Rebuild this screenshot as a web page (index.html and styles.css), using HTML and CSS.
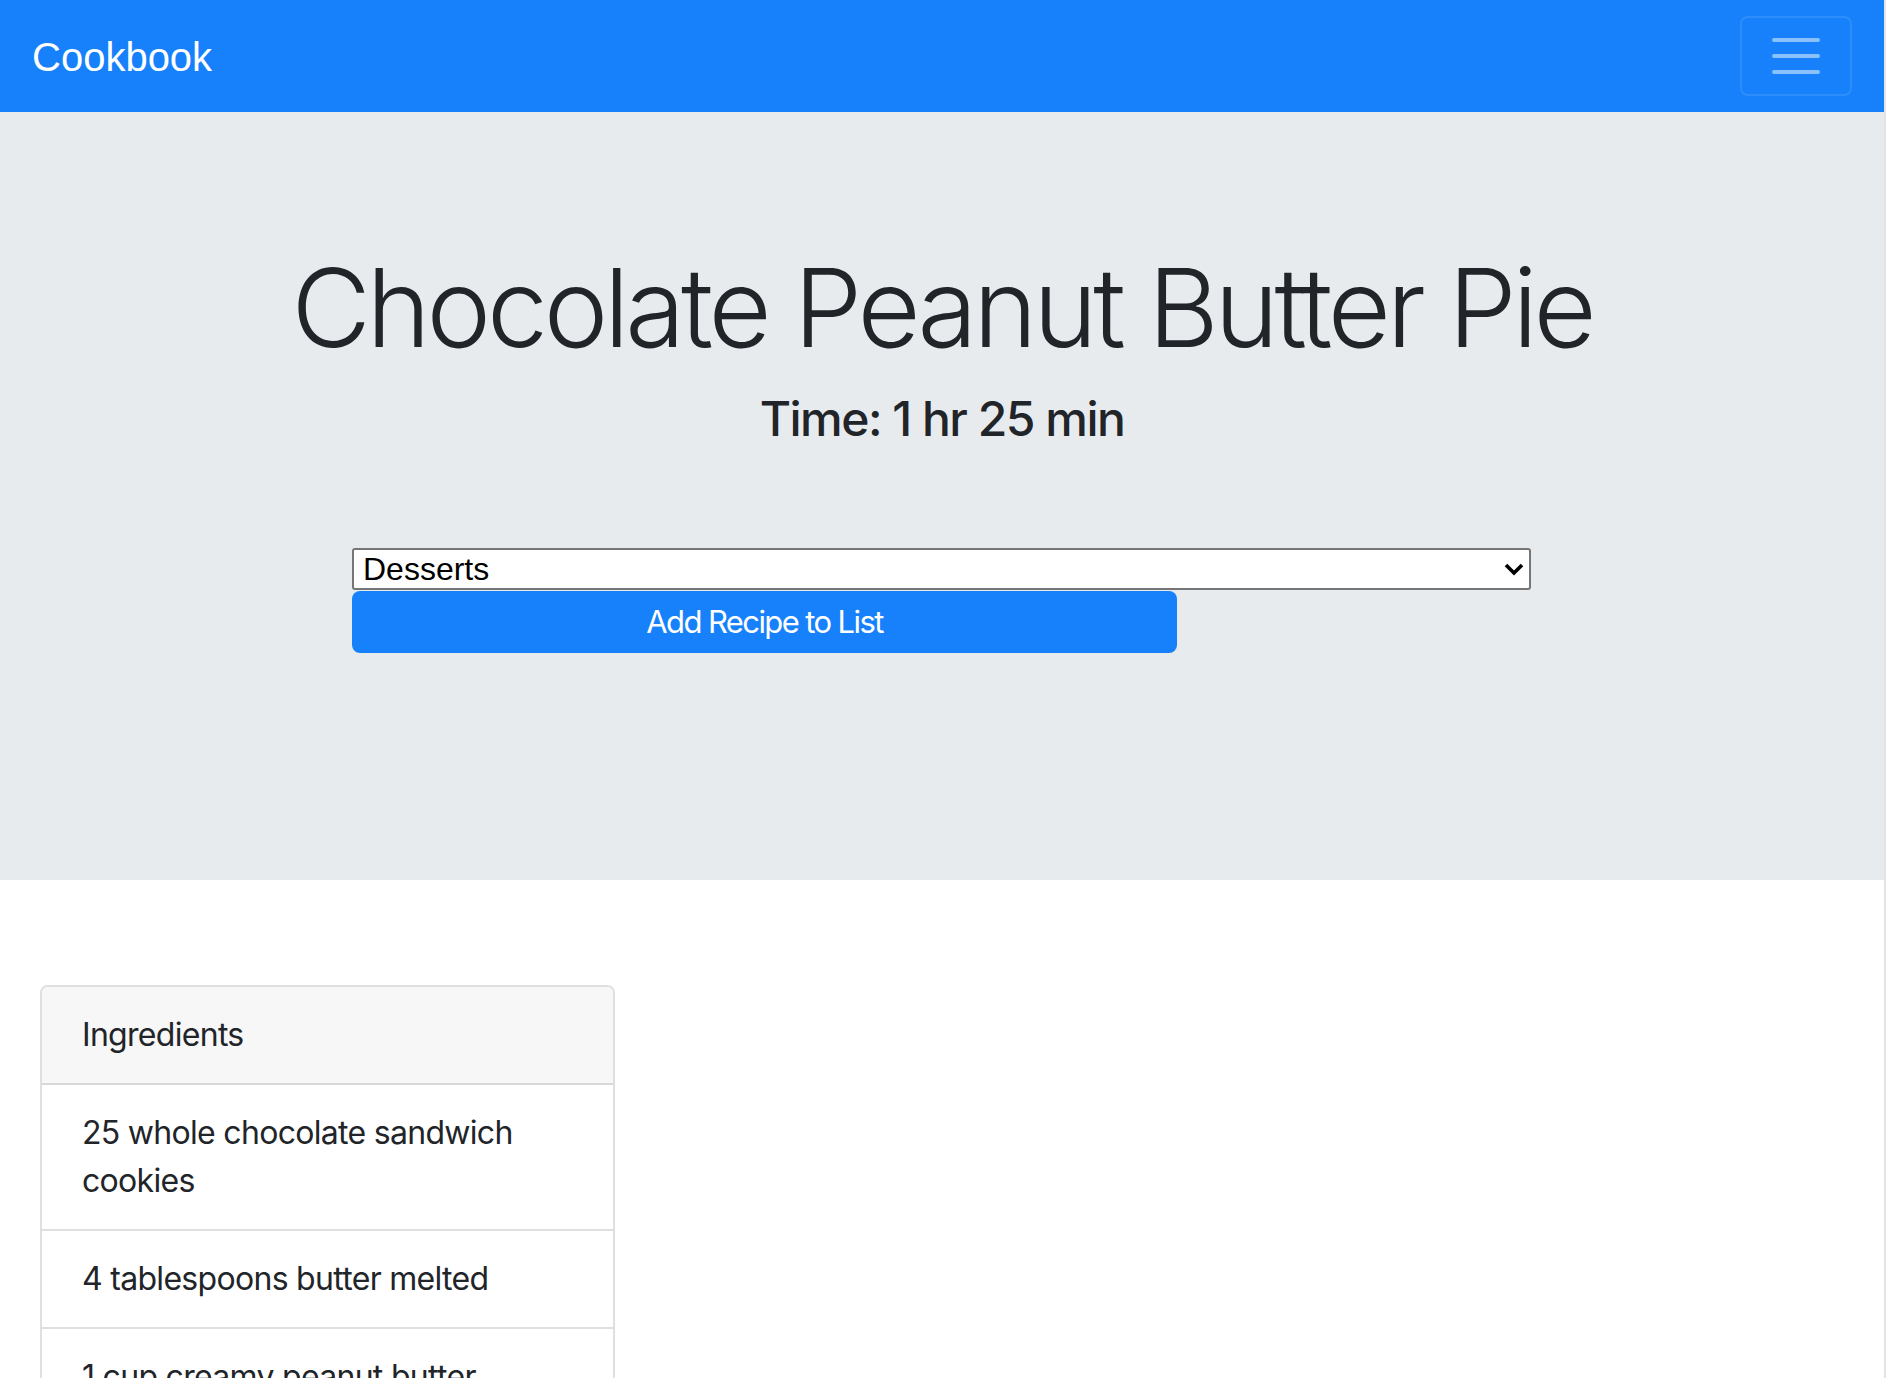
FILE: index.html
```html
<!DOCTYPE html>
<html lang="en">
<head>
<meta charset="utf-8">
<title>Cookbook</title>
<link rel="stylesheet" href="styles.css">
</head>
<body>
<div class="page">
  <nav class="navbar">
    <a class="brand" href="#">Cookbook</a>
    <button class="toggler" type="button" aria-label="Toggle navigation">
      <svg class="toggler-icon" width="60" height="60" viewBox="0 0 30 30"><path d="M4 7h22M4 15h22M4 23h22" stroke="rgba(255,255,255,0.5)" stroke-width="2" stroke-linecap="round" fill="none"/></svg>
    </button>
  </nav>
  <header class="jumbotron">
    <h1 class="title">Chocolate Peanut Butter Pie</h1>
    <h4 class="time">Time: 1 hr 25 min</h4>
    <form class="recipe-form">
      <div class="select-wrap">
        <select class="category">
          <option>Desserts</option>
          <option>Dinner</option>
          <option>Breakfast</option>
        </select>
        <svg class="chevron" width="22" height="16" viewBox="0 0 22 16"><path d="M3 4l8 8 8-8" stroke="#000" stroke-width="3.6" fill="none"/></svg>
      </div>
      <button class="add-btn" type="button">Add Recipe to List</button>
    </form>
  </header>
  <main class="content">
    <div class="card">
      <div class="card-header">Ingredients</div>
      <ul class="list">
        <li class="item">25 whole chocolate sandwich cookies</li>
        <li class="item">4 tablespoons butter melted</li>
        <li class="item">1 cup creamy peanut butter</li>
        <li class="item">8 ounces cream cheese softened</li>
        <li class="item">1 cup powdered sugar</li>
      </ul>
    </div>
  </main>
</div>
</body>
</html>
```
FILE: styles.css
```css
html {
  background: #e4e4e4;
}
body {
  margin: 0;
  font-family: Inter, "Noto Sans", sans-serif;
  color: #212529;
}
.page {
  margin-right: 2px;
  background: #ffffff;
  min-height: 1378px;
}
.navbar {
  display: flex;
  justify-content: space-between;
  align-items: center;
  background: #1681fb;
  padding: 16px 32px;
  height: 80px;
}
.brand {
  font-family: "Liberation Sans", Arial, sans-serif;
  font-size: 40px;
  line-height: 60px;
  padding: 11px 0 9px;
  color: #ffffff;
  text-decoration: none;
}
.toggler {
  width: 112px;
  height: 80px;
  padding: 8px 24px;
  background: transparent;
  border: 2px solid rgba(255, 255, 255, 0.1);
  border-radius: 8px;
  display: flex;
  align-items: center;
  justify-content: center;
}
.toggler-icon {
  display: block;
}
.jumbotron {
  background: #e8ebee;
  padding: 128px 64px 227px;
}
.title {
  font-weight: 300;
  font-size: 109px;
  line-height: 134px;
  margin: 0 0 16px;
  text-align: center;
  letter-spacing: -4.2px;
}
.time {
  font-weight: 500;
  font-size: 48px;
  line-height: 1.2;
  margin: 0;
  text-align: center;
  letter-spacing: -1.5px;
}
.recipe-form {
  margin: 100px 0 0 288px;
  display: flex;
  flex-direction: column;
  align-items: flex-start;
}
.select-wrap {
  position: relative;
  width: 1179px;
  height: 42px;
}
.category {
  appearance: none;
  -webkit-appearance: none;
  display: block;
  box-sizing: border-box;
  width: 100%;
  height: 42px;
  margin: 0;
  padding: 0 40px 0 9px;
  border: 2px solid #767676;
  border-radius: 3px;
  background: #ffffff;
  color: #000000;
  font-family: "Liberation Sans", Arial, sans-serif;
  font-size: 32px;
}
.chevron {
  position: absolute;
  right: 6px;
  top: 13px;
  pointer-events: none;
}
.add-btn {
  width: 825px;
  height: 62px;
  margin-top: 1px;
  border: none;
  border-radius: 8px;
  background: #1681fb;
  color: #ffffff;
  font-family: Inter, "Noto Sans", sans-serif;
  font-size: 31px;
  letter-spacing: -1.6px;
}
.content {
  padding: 105px 0 0 40px;
}
.card {
  width: 575px;
  box-sizing: border-box;
  border: 2px solid rgba(0, 0, 0, 0.125);
  border-radius: 8px;
  background: #ffffff;
  font-size: 32px;
  line-height: 48px;
  letter-spacing: -0.7px;
  overflow: hidden;
}
.card-header {
  background: #f7f7f7;
  padding: 24px 40px;
  border-bottom: 2px solid rgba(0, 0, 0, 0.125);
}
.list {
  list-style: none;
  margin: 0;
  padding: 0;
}
.item {
  padding: 24px 40px;
  border-bottom: 2px solid rgba(0, 0, 0, 0.125);
}
.item:last-child {
  border-bottom: none;
}
```
